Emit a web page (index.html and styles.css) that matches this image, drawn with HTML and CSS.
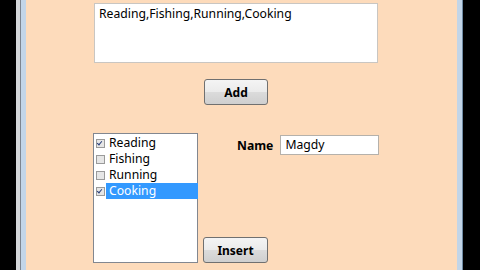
FILE: index.html
```html
<!DOCTYPE html>
<html>
<head>
<meta charset="utf-8">
<link rel="stylesheet" href="styles.css">
</head>
<body>
<div class="screen">
  <div class="frame">
    <div class="frame-inner">
      <div class="client">
        <div class="textbox-multi">Reading,Fishing,Running,Cooking</div>
        <div class="add-row"><button class="btn">Add</button></div>
        <div class="lower">
          <div class="listbox">
            <div class="item"><span class="chk on"></span><span class="lbl">Reading</span></div>
            <div class="item"><span class="chk"></span><span class="lbl">Fishing</span></div>
            <div class="item"><span class="chk"></span><span class="lbl">Running</span></div>
            <div class="item"><span class="chk on"></span><span class="lbl sel">Cooking</span></div>
          </div>
          <div class="side">
            <div class="name-row">
              <span class="name-label">Name</span>
              <div class="textbox">Magdy</div>
            </div>
            <button class="btn insert">Insert</button>
          </div>
        </div>
      </div>
    </div>
  </div>
</div>
</body>
</html>
```

FILE: styles.css
```css
html, body {
  margin: 0;
  padding: 0;
  background: #000;
}
.screen {
  width: 480px;
  height: 270px;
  display: flex;
  background: #000;
  font-family: "Noto Sans", "Open Sans", sans-serif;
  font-size: 12.2px;
  color: #000;
}
.frame {
  margin-left: 16px;
  width: 447px;
  height: 270px;
  box-sizing: border-box;
  border-left: 4px solid #d4d6d9;
  display: flex;
}
.frame-inner {
  flex: 1;
  box-sizing: border-box;
  border-left: 1px solid #7d8590;
  border-right: 1px solid #6f8aa3;
  background: #c2d5e8;
  padding: 0 5px;
  display: flex;
}
.client {
  flex: 1;
  background: #fddbbb;
  padding: 3px 0 0 67px;
  box-sizing: border-box;
}
.textbox-multi {
  margin-left: 1px;
  width: 284px;
  height: 60px;
  box-sizing: border-box;
  background: #fff;
  border: 1px solid #c9c6c2;
  padding: 2px 4px;
  line-height: 16px;
}
.add-row {
  width: 286px;
  display: flex;
  justify-content: center;
  margin-top: 16px;
}
.btn {
  width: 64px;
  height: 26px;
  box-sizing: border-box;
  border: 1px solid #707070;
  border-radius: 3px;
  background: linear-gradient(#f4f4f4 0%, #ebebeb 48%, #dbdbdb 52%, #cfcfcf 100%);
  font-family: "Noto Sans", "Open Sans", sans-serif;
  font-weight: bold;
  font-size: 12px;
  color: #000;
  padding: 0;
}
.lower {
  display: flex;
  margin-top: 28px;
}
.listbox {
  width: 105px;
  height: 130px;
  box-sizing: border-box;
  background: #fff;
  border: 1px solid #828790;
  padding: 1px 0 0 2px;
}
.item {
  display: flex;
  align-items: center;
  height: 16px;
}
.chk {
  width: 7px;
  height: 7px;
  border: 1px solid #9a9a9a;
  background: #e6e6e6;
  margin-right: 1px;
  flex: none;
  position: relative;
}
.chk.on::after {
  content: "";
  position: absolute;
  left: 1px;
  top: 0px;
  width: 2px;
  height: 4px;
  border-right: 1.5px solid #2a3f7a;
  border-bottom: 1.5px solid #2a3f7a;
  transform: rotate(40deg);
}
.lbl {
  flex: none;
  width: 92px;
  height: 16px;
  line-height: 16px;
  padding-left: 3px;
  box-sizing: border-box;
}
.lbl.sel {
  background: #3399ff;
  color: #fff;
}
.side {
  display: flex;
  flex-direction: column;
  justify-content: space-between;
  padding-left: 5px;
  padding-top: 2px;
}
.name-row {
  display: flex;
  align-items: center;
  gap: 7px;
  padding-left: 34px;
}
.name-label {
  font-weight: bold;
}
.textbox {
  width: 99px;
  height: 20px;
  box-sizing: border-box;
  background: #fff;
  border: 1px solid #b5b1ab;
  padding: 1px 4px;
  line-height: 16px;
}
.insert {
  width: 65px;
}
```
